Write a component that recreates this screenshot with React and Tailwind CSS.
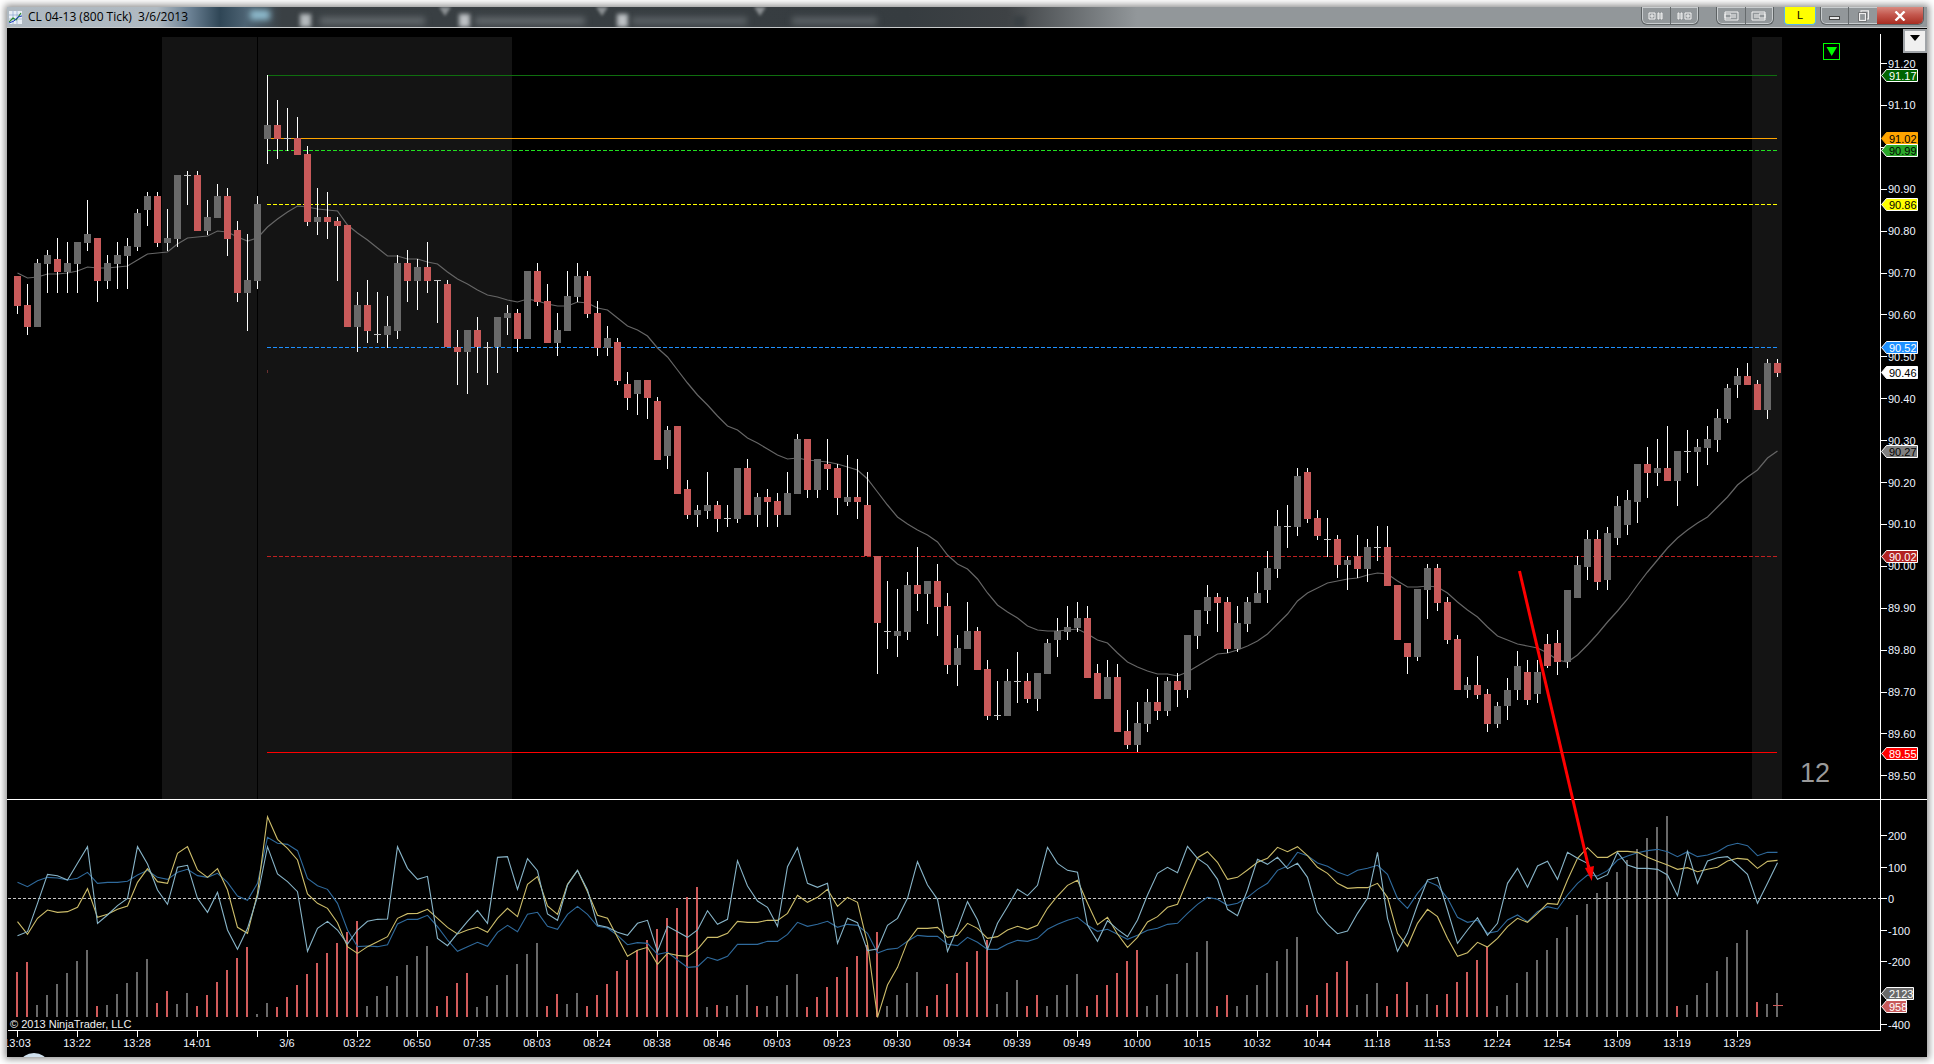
// NinjaTrader style chart window: CL 04-13 (800 Tick)
const RED = "#c85a5a";
const GRAY = "#696969";

// [color, bodyTop, bodyBottom, wickTop, wickBottom], one every 10px starting at x=17
const candles = [
  ["r",276,306,276,314],["r",305,327,284,335],["g",263,327,259,327],["g",255,264,250,293],["r",259,272,238,293],
  ["g",263,272,242,293],["g",242,264,242,293],["g",234,243,200,251],["r",238,281,238,302],["g",263,281,255,289],
  ["g",255,264,242,289],["g",246,256,238,289],["g",213,247,209,251],["g",196,210,192,226],["r",196,243,192,247],
  ["g",238,243,209,251],["g",175,239,175,247],["d",175,176,171,205],["r",175,231,171,231],["g",217,231,200,235],
  ["g",196,218,184,218],["r",196,239,188,256],["r",230,293,221,302],["g",280,293,234,331],["g",204,281,196,289],
  ["g",125,139,75,164],["r",125,139,100,159],["d",138,139,108,151],["r",138,155,117,155],["r",154,222,146,226],
  ["g",217,222,188,235],["r",217,222,192,239],["r",221,226,217,281],["r",225,327,225,327],["g",305,327,292,352],
  ["r",305,331,280,343],["d",334,335,292,343],["g",326,335,296,348],["g",263,331,255,339],["r",263,281,250,302],
  ["g",267,281,259,310],["r",267,281,242,293],["d",280,281,280,323],["r",284,347,280,347],["r",347,352,330,385],
  ["g",330,352,330,394],["r",330,347,317,373],["d",347,348,342,385],["g",317,347,317,373],["g",313,318,305,335],
  ["r",313,339,309,352],["g",271,339,271,339],["r",271,302,263,306],["r",301,343,284,343],["g",330,343,313,356],
  ["g",296,331,271,331],["g",276,297,263,302],["r",276,314,271,318],["r",313,348,301,356],["g",338,348,326,356],
  ["r",342,381,338,385],["r",384,398,372,410],["g",380,394,380,415],["r",380,398,380,419],["r",401,460,397,460],
  ["g",430,456,426,469],["r",426,494,426,494],["r",489,515,480,519],["g",510,515,505,527],["g",505,511,472,519],
  ["r",505,519,501,532],["d",518,519,505,527],["g",468,519,468,523],["r",468,515,459,515],["g",497,515,493,527],
  ["r",497,502,489,527],["r",501,515,493,527],["g",493,515,472,515],["g",439,494,434,494],["r",439,490,439,498],
  ["g",459,490,459,498],["r",464,469,439,490],["r",468,498,464,515],["g",497,502,455,506],["r",497,502,459,519],
  ["r",505,556,472,556],["r",556,623,556,674],["d",631,632,581,649],["g",631,636,589,657],["g",585,632,572,640],
  ["r",585,594,547,611],["g",581,594,581,624],["r",581,607,564,636],["r",606,665,593,674],["g",648,665,635,686],
  ["g",631,649,602,649],["r",631,670,627,670],["r",669,716,660,720],["d",715,716,681,720],["g",681,716,669,716],
  ["d",681,682,652,703],["r",681,699,673,703],["g",673,699,673,711],["g",643,674,639,674],["g",631,640,618,657],
  ["g",627,632,606,640],["g",618,628,602,632],["r",618,678,606,678],["r",673,699,664,699],["g",677,699,660,699],
  ["r",677,732,664,732],["r",731,745,710,749],["g",723,745,702,752],["g",702,724,689,732],["r",702,711,677,720],
  ["g",681,711,677,716],["r",681,690,673,707],["g",635,690,635,698],["g",610,636,610,649],["g",597,611,585,624],
  ["r",597,603,593,632],["r",602,649,597,653],["g",623,649,606,652],["g",602,624,597,632],["g",593,603,572,603],
  ["g",568,590,551,603],["g",526,569,510,578],["d",526,527,505,548],["g",476,527,468,536],["r",472,519,468,523],
  ["r",518,536,510,540],["d",539,540,518,557],["r",539,565,535,578],["g",560,565,556,590],["r",556,569,535,578],
  ["g",547,569,539,582],["d",547,548,526,561],["r",547,586,526,586],["r",585,640,585,640],["r",643,657,643,674],
  ["g",589,657,589,661],["g",568,590,564,619],["r",568,603,564,611],["r",602,640,597,644],["r",639,690,635,690],
  ["g",685,690,677,698],["r",685,695,656,699],["r",694,724,689,732],["g",706,724,702,728],
  ["g",690,706,678,720],["g",666,690,651,700],["r",672,700,660,705],["g",672,694,660,703],["r",644,666,634,668],
  ["r",643,662,630,675],["g",590,662,590,668],["g",565,598,556,598],["g",539,567,530,580],["r",539,582,530,590],
  ["g",533,580,527,590],["g",506,538,496,545],["g",500,525,490,535],
  ["g",464,502,464,523],["r",464,473,447,498],["g",468,473,439,486],["r",468,481,426,481],["g",451,481,451,506],
  ["d",451,452,430,473],["g",447,452,439,486],["g",439,448,426,465],["g",418,440,409,452],["g",388,419,384,423],
  ["g",376,385,368,398],["r",376,385,363,385],["r",384,410,380,410],["g",363,410,359,419],["r",363,373,359,377],
];

// moving average on the price panel, y in pixels
const sma = [
  273,278,277,274,274,273,271,267,268,268,267,266,260,254,253,252,244,238,237,236,231,232,237,241,238,
  227,219,212,206,207,209,210,211,225,233,240,248,256,256,259,259,262,264,272,279,284,290,295,297,
  300,302,299,301,304,306,306,302,303,308,310,318,326,330,336,348,357,370,383,395,405,416,426,430,438,
  443,449,455,459,458,460,461,462,464,467,470,479,492,505,517,524,530,535,542,555,564,569,579,593,605,
  612,618,626,630,631,631,630,629,634,640,643,653,662,667,671,674,674,676,672,666,660,654,653,650,646,
  641,634,624,614,601,593,588,583,581,579,578,575,573,574,581,587,587,586,587,593,602,610,617,627,636,
  640,644,646,648,653,660,662,655,645,634,622,611,599,
  585,572,560,548,538,530,523,517,507,497,485,477,470,458,451,
];

const SERIES = {
  light: [
    437,425,340,253,257,270,220,170,400,375,347,325,170,222,300,343,232,226,325,367,307,420,478,415,320,
    170,252,275,305,484,415,394,420,462,420,394,388,387,170,235,268,259,445,467,430,394,361,400,202,
    200,298,206,242,372,391,285,241,300,405,412,427,436,400,391,484,409,425,442,420,362,403,388,212,288,
    333,352,409,230,173,280,292,280,460,385,398,482,477,406,385,325,215,285,328,484,415,335,390,478,400,
    350,298,317,286,172,220,241,247,405,454,392,418,440,390,315,250,232,248,169,205,226,268,358,377,300,
    208,223,202,236,220,262,367,403,431,423,370,325,187,385,484,430,345,270,262,360,460,420,383,436,400,
    280,235,292,228,214,268,187,205,220,268,254,187,225,235,235,238,255,317,184,280,213,203,200,225,253,340,280,218,
  ],
  yellow: [
    395,433,385,360,367,365,352,296,382,373,358,348,277,236,275,280,190,170,240,262,236,300,412,430,310,
    80,148,175,210,312,340,355,398,470,490,470,455,440,385,371,370,358,385,412,432,420,412,427,385,
    355,380,283,260,348,373,283,241,305,376,385,442,499,481,472,523,490,496,499,478,442,442,430,394,397,
    397,391,391,370,316,337,322,298,349,322,337,460,682,585,532,455,415,415,412,442,436,400,415,445,440,
    420,409,418,406,355,318,286,271,340,404,382,432,472,442,396,380,352,343,270,203,185,217,268,262,240,
    217,205,172,185,170,197,232,250,280,295,293,293,280,322,430,469,400,358,380,445,499,488,457,471,445,
    410,385,397,370,340,343,270,205,173,202,202,184,184,187,202,214,225,238,233,245,238,232,213,205,208,235,214,211,
  ],
  blue: [
    277,290,272,262,264,270,265,247,280,277,277,274,255,241,262,268,247,238,257,262,250,277,318,331,280,
    142,160,163,182,265,287,298,340,420,470,468,470,464,402,388,388,376,410,450,484,470,457,469,427,
    406,425,373,367,409,418,373,349,373,409,414,436,464,458,460,493,487,510,532,530,502,511,499,463,463,
    463,454,454,433,397,409,403,394,412,403,406,430,489,478,475,454,436,439,439,463,467,442,457,478,478,
    462,451,454,445,418,403,391,382,406,424,418,433,448,436,421,415,403,400,370,343,322,328,346,340,322,
    298,280,241,228,187,197,219,229,246,257,241,235,226,253,325,355,310,274,287,325,382,397,391,430,424,
    390,375,395,365,350,357,315,280,255,258,242,210,198,188,182,178,185,200,185,200,195,185,167,160,167,197,187,187,
  ],
};

// color + top of each volume bar, top in 3x units from y=790
const volume = [
  "r546","r516","g645","g615","g582","g549","g513","g480","r648","g645","g612","g579","g546","g507","r639","r603","g642","g609","r648","r615",
  "r576","r540","r504","r471","g672","g639","r651","r621","r585","r552","r519","r489","r459","r426","r393","g648","g618","g588","g558","g525",
  "g498","g468","r648","r618","r579","r549","g651","g618","g585",
  "g555","g522","g492","g459","r648","r612","g642","g609","r648","r615","r582","r543","r510","r480","r450","r417","r384","r354","r321","r291",
  "g651","r645","g648","g615","g585","r648","g648","g618","g585","g552","r651","r621","r591","r561","r531","r498","r465","r426","g648","g615",
  "g579","g546","r648","r615","r582","r549","r516","r483","r450","g642",
  "g606","g570","r648","r615","g648","g615","g585","g552","r648","r615","r585","r549","r513","r480","g648","g615","g582","g552","g519","g486",
  "g453","r648","r615","g648","g615","g585","g549","g513","g477","g441","r645","r615","r579","r546","r513","g645","g612","g579","r648","r612",
  "r576","g645","g612","r645","r612","r576","r546","r510","r471","g648",
  "g615","g580","g546","g510","g480","g444","g411","g375","g342","g309","g276","g246","g210","g177","g144","g111","g78","r648","g645","g615",
  "g579","g543","g501","g459","g420","r636","g642","g609",
];

const timeLabels = [
  ["13:03",17],["13:22",77],["13:28",137],["14:01",197],["3/6",287],["03:22",357],["06:50",417],["07:35",477],["08:03",537],["08:24",597],
  ["08:38",657],["08:46",717],["09:03",777],["09:23",837],["09:30",897],["09:34",957],["09:39",1017],["09:49",1077],["10:00",1137],
  ["10:15",1197],["10:32",1257],["10:44",1317],["11:18",1377],["11:53",1437],["12:24",1497],["12:54",1557],["13:09",1617],["13:19",1677],["13:29",1737],
];

const priceTicks = ["91.20","91.10","91.00","90.90","90.80","90.70","90.60","90.50","90.40","90.30","90.20","90.10","90.00","89.90","89.80","89.70","89.60","89.50"];

const priceLines = [
  { y: 75.5, color: "#0f6e0f" },
  { y: 138.5, color: "#ffa500" },
  { y: 150.5, color: "#20e020", dash: "4 2" },
  { y: 204.5, color: "#ffff00", dash: "4 2" },
  { y: 347.5, color: "#1e90ff", dash: "4 2" },
  { y: 556.5, color: "#c02020", dash: "4 2" },
  { y: 752.5, color: "#ff0000" },
];

const priceBadges = [
  { y: 75, label: "91.17", fill: "#006400", text: "#ffffff" },
  { y: 138, label: "91.02", fill: "#ffa500", text: "#000000", stroke: "#ffa500" },
  { y: 150, label: "90.99", fill: "#2aa82a", text: "#000000" },
  { y: 204, label: "90.86", fill: "#ffff00", text: "#000000" },
  { y: 347, label: "90.52", fill: "#1e90ff", text: "#ffffff" },
  { y: 372, label: "90.46", fill: "#ffffff", text: "#000000" },
  { y: 451, label: "90.27", fill: "#808080", text: "#000000" },
  { y: 556, label: "90.02", fill: "#b22222", text: "#ffffff" },
  { y: 753, label: "89.55", fill: "#ff0000", text: "#ffffff" },
];

function Badge({ y, label, fill, text, stroke = "#ffffff", right = 1918 }) {
  return (
    <g>
      <path
        d={`M1881.5 ${y + 0.5} L1886.5 ${y - 5.5} H${right - 0.5} V${y + 6.5} H1886.5 Z`}
        fill={fill}
        stroke={stroke}
      />
      <text x={1889} y={y + 4.5} fill={text}>{label}</text>
    </g>
  );
}

function Candle({ c, i }) {
  const [kind, top, bottom, wickTop, wickBottom] = c;
  const x = 14 + i * 10;
  return (
    <g>
      <rect x={x + 3} y={wickTop} width={1} height={wickBottom - wickTop} fill="#ffffff" />
      {kind === "d" ? (
        <rect x={x} y={top} width={7} height={1} fill="#c0c0c0" />
      ) : (
        <rect x={x} y={top} width={7} height={bottom - top} fill={kind === "r" ? RED : GRAY} />
      )}
    </g>
  );
}

function PricePanel() {
  const smaPoints = sma.map((y, i) => `${17.5 + i * 10},${y}`).join(" ");
  return (
    <svg
      viewBox="7 28 1920 771"
      className="block w-[1920px] h-[771px] font-['Liberation_Sans'] text-[11px]"
    >
      <rect x={162} y={37} width={350} height={762} fill="#141414" />
      <rect x={1752} y={37} width={30} height={762} fill="#141414" />
      <rect x={257} y={37} width={1} height={762} fill="#000000" />
      <rect x={267} y={370} width={1} height={3} fill="#6a3030" />

      {priceLines.map((l) => (
        <line key={l.y} x1={267} x2={1777} y1={l.y} y2={l.y} stroke={l.color} strokeDasharray={l.dash} />
      ))}

      <polyline points={smaPoints} fill="none" stroke="#666666" strokeWidth="1.2" />
      <g shapeRendering="crispEdges">
        {candles.map((c, i) => (
          <Candle key={i} c={c} i={i} />
        ))}
      </g>

      <text x={1800} y={782} fontSize="27" fill="#9a9a9a">12</text>

      {/* signal marker */}
      <rect x={1823.5} y={43.5} width={16} height={16} fill="none" stroke="#00ff00" />
      <path d="M1826.5 47 H1837 L1831.7 56 Z" fill="#00ff00" />

      {/* axis */}
      <rect x={1880} y={34} width={1} height={765} fill="#ffffff" />
      {priceTicks.map((t, i) => {
        const y = 63 + i * 41.9;
        return (
          <g key={t}>
            <rect x={1881} y={Math.round(y)} width={6} height={1} fill="#ffffff" />
            <text x={1888} y={y + 4.5} fill="#f0f5ff">{t}</text>
          </g>
        );
      })}
      {priceBadges.map((b) => (
        <Badge key={b.label} {...b} />
      ))}
    </svg>
  );
}

function IndicatorPanel() {
  const toY = (z) => 790 + z / 3;
  const line = (values) => values.map((z, i) => `${17.5 + i * 10},${toY(z)}`).join(" ");
  return (
    <svg
      viewBox="7 800 1920 257"
      className="block w-[1920px] h-[257px] font-['Liberation_Sans'] text-[11px]"
    >
      <g shapeRendering="crispEdges">
        {volume.map((v, i) => {
          const top = toY(Number(v.slice(1)));
          return (
            <rect key={i} x={16 + i * 10} y={top} width={2} height={1017 - top} fill={v[0] === "r" ? "#d05a5a" : GRAY} />
          );
        })}
      </g>
      <rect x={1773} y={1005} width={10} height={1} fill="#d05a5a" />
      <line x1={8} x2={1880} y1={898.5} y2={898.5} stroke="#c8c8c8" strokeDasharray="3 2" />
      <polyline points={line(SERIES.blue)} fill="none" stroke="#2f6a9c" strokeWidth="1.1" />
      <polyline points={line(SERIES.yellow)} fill="none" stroke="#cdbd6a" strokeWidth="1.1" />
      <polyline points={line(SERIES.light)} fill="none" stroke="#87b4c8" strokeWidth="1.1" />

      <text x={10} y={1028} fill="#f0f0f0">© 2013 NinjaTrader, LLC</text>

      {/* axes */}
      <rect x={8} y={1030} width={1873} height={1} fill="#ffffff" />
      <rect x={1880} y={800} width={1} height={230} fill="#ffffff" />
      {[["200", 835], ["100", 867], ["0", 898], ["-100", 930], ["-200", 961], ["-300", 993], ["-400", 1024]].map(([t, y]) => (
        <g key={t}>
          <rect x={1881} y={y} width={6} height={1} fill="#ffffff" />
          <text x={1888} y={y + 4.5} fill="#f0f5ff">{t}</text>
        </g>
      ))}
      <Badge y={993} label="2123" fill="#696969" text="#ffffff" right={1914} />
      <Badge y={1006} label="958" fill="#c85a5a" text="#ffffff" right={1907} />

      <rect x={257} y={1031} width={1} height={6} fill="#ffffff" />
      {timeLabels.map(([t, x]) => (
        <g key={t}>
          <rect x={x} y={1031} width={1} height={6} fill="#ffffff" />
          <text x={x} y={1047} fill="#f0f5ff" textAnchor="middle">{t}</text>
        </g>
      ))}
      {/* bit of the desktop orb showing through */}
      <ellipse cx={34} cy={1062} rx={13} ry={9} fill="#cfe0ee" />
    </svg>
  );
}

function ButtonGroup({ children, className = "" }) {
  return (
    <div className={`flex h-[18px] rounded-b-md border border-t-0 border-[#5d6264] shadow-[inset_0_0_0_1px_#c9cdcf] overflow-hidden ${className}`}>
      {children}
    </div>
  );
}

function CellIcon({ d }) {
  return (
    <svg viewBox="0 0 18 10" className="w-[18px] h-[10px]" fill="none" stroke="#f4f4f4" strokeWidth="1">
      <path d={d} />
    </svg>
  );
}

function Notch({ className }) {
  return (
    <div className={`absolute top-0 w-0 h-0 border-l-[6px] border-r-[6px] border-t-[9px] border-l-transparent border-r-transparent border-t-[#8a8f92] blur-[1.5px] ${className}`} />
  );
}

function TitleBar() {
  return (
    <div className="relative h-[21px] shrink-0 border-b border-[#c8cacb] bg-[linear-gradient(90deg,#aeb8c0_0,#b0bac2_150px,#6b8194_183px,#2f4656_213px,#4c6272_238px,#3a4044_275px,#363c40_900px,#3e4245_1000px,#92979a_1130px,#92979a_100%)] overflow-hidden">
      {/* blurred taskbar-ish stuff behind the glass */}
      <div className="absolute left-[243px] top-[3px] w-[20px] h-[10px] bg-[#8fbccf] blur-[3px]" />
      <Notch className="left-[432px]" />
      <Notch className="left-[589px]" />
      <Notch className="left-[747px]" />
      <div className="absolute left-[293px] top-[7px] w-[11px] h-[13px] bg-[#b4b9bc] blur-[2px]" />
      <div className="absolute left-[313px] top-[10px] w-[105px] h-[8px] bg-[#61676b] blur-[3px]" />
      <div className="absolute left-[452px] top-[7px] w-[11px] h-[13px] bg-[#bcc0c3] blur-[2px]" />
      <div className="absolute left-[468px] top-[10px] w-[110px] h-[8px] bg-[#61676b] blur-[3px]" />
      <div className="absolute left-[610px] top-[7px] w-[11px] h-[13px] bg-[#bcc0c3] blur-[2px]" />
      <div className="absolute left-[625px] top-[10px] w-[115px] h-[8px] bg-[#5a6064] blur-[3px]" />
      <div className="absolute left-[785px] top-[10px] w-[85px] h-[8px] bg-[#5a6064] blur-[3px]" />
      <div className="absolute left-[1006px] top-[9px] w-[12px] h-[12px] bg-[#3a4044] blur-[2px]" />

      <div className="relative flex items-center h-[20px] pl-[2px]">
        <svg viewBox="0 0 13 13" className="w-[13px] h-[13px] shrink-0">
          <rect width="13" height="13" fill="#e8eef4" />
          <path d="M0 4H13M0 8H13M4 0V13M8 0V13" stroke="#7d9ccc" strokeWidth="0.6" />
          <path d="M0 11 L4 7 L7 9 L12 2" stroke="#2a8a2a" strokeWidth="1.2" fill="none" />
          <path d="M0 12 L5 10 L9 6 L13 5" stroke="#2040c0" strokeWidth="1" fill="none" />
        </svg>
        <span className="ml-[6px] font-['Open_Sans'] text-[12px] text-black whitespace-pre">CL 04-13 (800 Tick)  3/6/2013</span>

        <div className="ml-auto mr-[3px] flex items-start h-[20px]">
          <ButtonGroup className="w-[58px]">
            <div className="flex-1 flex items-center justify-center border-r border-[#666b6d]">
              <CellIcon d="M2 2H8V8H2ZM4 4H6V6H4ZM11 2H12V8H11ZM14 2H15V8H14Z" />
            </div>
            <div className="flex-1 flex items-center justify-center">
              <CellIcon d="M3 2H4V8H3ZM6 2H7V8H6ZM10 2H16V8H10ZM12 4H14V6H12Z" />
            </div>
          </ButtonGroup>
          <ButtonGroup className="w-[58px] ml-[17px]">
            <div className="flex-1 flex items-center justify-center border-r border-[#666b6d]">
              <CellIcon d="M3 1H16V9H3ZM3 3H9V7H3ZM11 3V7M13 3V7" />
            </div>
            <div className="flex-1 flex items-center justify-center">
              <CellIcon d="M2 1H15V9H2ZM9 3H15V7H9ZM5 3V7M7 3V7" />
            </div>
          </ButtonGroup>
          <div className="w-[32px] h-[18px] ml-[10px] flex items-center justify-center bg-[#ffff00] border border-t-0 border-[#5ab4e8] rounded-b-sm font-['Liberation_Sans'] text-[11px] text-black">L</div>
          <ButtonGroup className="w-[104px] ml-[4px]">
            <div className="w-[28px] flex items-end justify-center pb-[4px] border-r border-[#666b6d]">
              <div className="w-[11px] h-[4px] bg-[#e8e8e8] border border-[#444]" />
            </div>
            <div className="w-[28px] flex items-center justify-center">
              <svg viewBox="0 0 11 12" className="w-[11px] h-[12px]" fill="none" stroke="#eeeeee" strokeWidth="1.2">
                <path d="M3 2.5V0.8H10.4V9H8.5" />
                <rect x="0.8" y="2.8" width="7.4" height="8.4" stroke="#333" strokeWidth="0.6" />
                <rect x="1.5" y="3.5" width="6" height="7" />
              </svg>
            </div>
            <div className="flex-1 flex items-center justify-center bg-[linear-gradient(180deg,#d88a80_0,#c4584e_45%,#a82e22_100%)]">
              <svg viewBox="0 0 12 10" className="w-[12px] h-[10px]" stroke="#ffffff" strokeWidth="2.4" fill="none">
                <path d="M1.5 0.5 L10.5 9.5 M10.5 0.5 L1.5 9.5" />
              </svg>
            </div>
          </ButtonGroup>
        </div>
      </div>
    </div>
  );
}

function App() {
  return (
    <div className="w-[1934px] h-[1064px] bg-white overflow-hidden pl-[7px] pt-[7px]">
      <div className="w-[1920px] h-[1050px] flex flex-col bg-black shadow-[0_0_7px_2px_rgba(0,0,0,0.45)]">
        <TitleBar />
        <div className="relative">
          <PricePanel />
          <div className="h-px bg-white" />
          <IndicatorPanel />
          {/* little menu button in the panel corner */}
          <div className="absolute right-0 top-[1px] w-[24px] h-[24px] p-[2px] bg-[#a0a4a8]">
            <div className="w-full h-full bg-[#f0f0f0] flex items-start justify-center pt-[4px]">
              <div className="w-0 h-0 border-l-[5px] border-r-[5px] border-t-[6px] border-l-transparent border-r-transparent border-t-black" />
            </div>
          </div>
          {/* red arrow drawn by hand over both panels */}
          <svg viewBox="7 28 1920 1029" className="absolute inset-0 w-[1920px] h-[1029px] pointer-events-none">
            <line x1={1519.5} y1={571} x2={1589} y2={869} stroke="#ff0000" strokeWidth="3" />
            <path d="M1585 868 L1594 866 L1591.8 881 Z" fill="#ff0000" />
          </svg>
        </div>
      </div>
    </div>
  );
}

export default App;
